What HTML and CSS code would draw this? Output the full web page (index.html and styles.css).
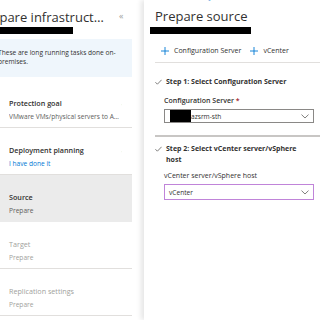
FILE: index.html
```html
<!DOCTYPE html>
<html lang="en">

<head>
  <meta charset="UTF-8">
  <meta name="viewport" content="width=device-width, initial-scale=1.0">
  <title>Prepare source</title>
  <link rel="stylesheet" href="styles.css">
</head>

<body>
  <!-- left blade: steps of the wizard -->
  <div class="blade-left">
    <div class="blade-head">
      <h1 class="title title-left">Prepare infrastructure</h1>
      <span class="collapse">&laquo;</span>
    </div>
    <div class="redact redact-left"></div>
    <div class="info">These are long running tasks done on-premises.</div>

    <ul class="steps">
      <li class="step">
        <div class="step-text">
          <div class="step-name">Protection goal</div>
          <div class="step-sub">VMware VMs/physical servers to Azure</div>
        </div>
        <svg class="tick" width="9" height="7" viewBox="0 0 9 7"><path d="M0.5 3.8 L3 6.2 L8.5 0.6" fill="none" stroke="#57a300" stroke-width="0.9"/></svg>
      </li>
      <li class="step">
        <div class="step-text">
          <div class="step-name">Deployment planning</div>
          <div class="step-sub link">I have done it</div>
        </div>
        <svg class="tick" width="9" height="7" viewBox="0 0 9 7"><path d="M0.5 3.8 L3 6.2 L8.5 0.6" fill="none" stroke="#57a300" stroke-width="0.9"/></svg>
      </li>
      <li class="step active">
        <div class="step-text">
          <div class="step-name">Source</div>
          <div class="step-sub">Prepare</div>
        </div>
        <svg class="chev" width="5" height="9" viewBox="0 0 5 9"><path d="M0.6 0.5 L4.3 4.5 L0.6 8.5" fill="none" stroke="#605e5c" stroke-width="0.9"/></svg>
      </li>
      <li class="step disabled">
        <div class="step-text">
          <div class="step-name">Target</div>
          <div class="step-sub">Prepare</div>
        </div>
        <svg class="chev" width="5" height="9" viewBox="0 0 5 9"><path d="M0.6 0.5 L4.3 4.5 L0.6 8.5" fill="none" stroke="#a19f9d" stroke-width="0.9"/></svg>
      </li>
      <li class="step disabled">
        <div class="step-text">
          <div class="step-name">Replication settings</div>
          <div class="step-sub">Prepare</div>
        </div>
        <svg class="chev" width="5" height="9" viewBox="0 0 5 9"><path d="M0.6 0.5 L4.3 4.5 L0.6 8.5" fill="none" stroke="#a19f9d" stroke-width="0.9"/></svg>
      </li>
    </ul>
  </div>

  <!-- right blade: prepare source form -->
  <div class="blade-right">
    <div class="crumb">Home &gt; Recovery Services vaults &gt; azsrm-vault</div>
    <h1 class="title">Prepare source</h1>
    <div class="redact redact-right"></div>

    <div class="toolbar">
      <span class="tool">
        <svg width="8" height="8" viewBox="0 0 8 8"><path d="M4 0 V8 M0 4 H8" stroke="#0078d4" stroke-width="0.9"/></svg>
        Configuration Server
      </span>
      <span class="tool">
        <svg width="8" height="8" viewBox="0 0 8 8"><path d="M4 0 V8 M0 4 H8" stroke="#0078d4" stroke-width="0.9"/></svg>
        vCenter
      </span>
    </div>

    <div class="section">
      <div class="section-head">
        <svg width="7" height="6" viewBox="0 0 7 6"><path d="M0.4 3.2 L2.4 5.2 L6.6 0.8" fill="none" stroke="#605e5c" stroke-width="0.8"/></svg>
        <span>Step 1: Select Configuration Server</span>
      </div>
      <div class="field">
        <div class="label">Configuration Server <span class="req">*</span></div>
        <div class="select">
          <span class="redact-inline"></span>
          <span class="value">azsrm-sth</span>
          <svg class="down" width="8" height="5" viewBox="0 0 8 5"><path d="M0.5 0.6 L4 4 L7.5 0.6" fill="none" stroke="#605e5c" stroke-width="0.8"/></svg>
        </div>
      </div>
    </div>

    <div class="section section-2">
      <div class="section-head">
        <svg width="7" height="6" viewBox="0 0 7 6"><path d="M0.4 3.2 L2.4 5.2 L6.6 0.8" fill="none" stroke="#605e5c" stroke-width="0.8"/></svg>
        <span>Step 2: Select vCenter server/vSphere host</span>
      </div>
      <div class="field">
        <div class="label">vCenter server/vSphere host</div>
        <div class="select select-focus">
          <span class="value value-pad">vCenter</span>
          <svg class="down" width="8" height="5" viewBox="0 0 8 5"><path d="M0.5 0.6 L4 4 L7.5 0.6" fill="none" stroke="#605e5c" stroke-width="0.8"/></svg>
        </div>
      </div>
    </div>
  </div>
</body>

</html>
```

FILE: styles.css
```css
html,
body {
  margin: 0;
  height: 100%;
}

body {
  display: flex;
  font-family: "Open Sans", "Noto Sans", sans-serif;
  color: #323130;
  background: #fff;
  overflow: hidden;
}

.blade-left {
  width: 132px;
  flex-shrink: 0;
  margin-right: 12px;
}

.blade-head {
  display: flex;
  align-items: center;
  height: 27px;
}

.title {
  margin: 0;
  font-size: 13px;
  font-weight: 400;
  line-height: 18px;
  padding-top: 6px;
  white-space: nowrap;
}

.title-left {
  width: 126px;
  margin-left: -21px;
  overflow: hidden;
  text-overflow: ellipsis;
}

.collapse {
  margin-left: 14px;
  padding-top: 4px;
  font-size: 9px;
  color: #a19f9d;
}

.redact {
  height: 7px;
  background: #000;
}

.redact-left {
  width: 73px;
}

.info {
  margin-top: 5px;
  height: 38px;
  box-sizing: border-box;
  padding: 9px 14px 0 0;
  margin-left: -2px;
  width: 134px;
  background: #eff6fc;
  font-size: 6.6px;
  line-height: 9px;
}

.steps {
  list-style: none;
  margin: 4px 0 0;
  padding: 0;
}

.step {
  display: flex;
  align-items: flex-start;
  justify-content: space-between;
  height: 46px;
  box-sizing: content-box;
  border-bottom: 1px solid #e1dfdd;
  padding: 0 9px 0 9px;
}

.step-text {
  padding-top: 15px;
}

.step-name {
  font-size: 7.2px;
  font-weight: 600;
  line-height: 14px;
}

.step-sub {
  font-size: 6.6px;
  line-height: 14px;
  color: #605e5c;
  width: 112px;
  white-space: nowrap;
  overflow: hidden;
  text-overflow: ellipsis;
}

.step-sub.link {
  color: #0078d4;
}

.tick {
  margin-top: 20px;
  margin-right: 1px;
}

.chev {
  margin-top: 24px;
  margin-right: 2px;
}

.step.active {
  background: #ebebeb;
  border-bottom-color: #ebebeb;
}

.step.disabled .step-name,
.step.disabled .step-sub {
  color: #a19f9d;
  font-weight: 400;
}

.blade-right {
  flex: 1;
  padding-left: 11px;
  box-shadow: -3px 0 5px rgba(0, 0, 0, 0.1);
  overflow: hidden;
}

.crumb {
  margin-top: -8px;
  height: 10px;
  font-size: 7px;
  line-height: 10px;
  color: #0078d4;
  white-space: nowrap;
}

.blade-right .title {
  padding-top: 8px;
  line-height: 13px;
  height: 13px;
  margin-bottom: 0;
}

.redact-right {
  width: 101px;
  margin-left: -5px;
  margin-top: 4px;
}

.toolbar {
  display: flex;
  gap: 9px;
  padding: 13px 0 0 6px;
  height: 15px;
  border-bottom: 1px solid #e1dfdd;
}

.tool {
  display: flex;
  align-items: flex-start;
  gap: 5px;
  font-size: 7px;
  line-height: 8px;
}

.section {
  padding-top: 13px;
  padding-right: 6px;
}

.section-head {
  display: flex;
  align-items: center;
  gap: 4px;
  font-size: 7px;
  font-weight: 700;
  line-height: 11px;
}

.field {
  padding-left: 9px;
  margin-top: 9px;
}

.label {
  font-size: 7px;
  font-weight: 600;
  line-height: 10px;
}

.req {
  color: #a4262c;
}

.select {
  display: flex;
  align-items: center;
  height: 12px;
  margin-top: 3px;
  border: 1px solid #8a8886;
  font-size: 6.6px;
}

.redact-inline {
  width: 21px;
  height: 100%;
  margin-left: 5px;
  background: #000;
}

.value {
  flex: 1;
}

.value-pad {
  padding-left: 4px;
}

.down {
  margin-right: 4px;
}

.section-2 {
  margin-top: 12px;
  border-top: 2px solid #c8c6c4;
  padding-top: 6px;
}

.section-2 .section-head {
  align-items: flex-start;
  width: 150px;
}

.section-2 .section-head svg {
  margin-top: 3px;
  flex-shrink: 0;
}

.section-2 .field {
  margin-top: 6px;
}

.section-2 .label {
  font-weight: 400;
}

.select-focus {
  height: 14px;
  border-color: #c084d9;
}
```
